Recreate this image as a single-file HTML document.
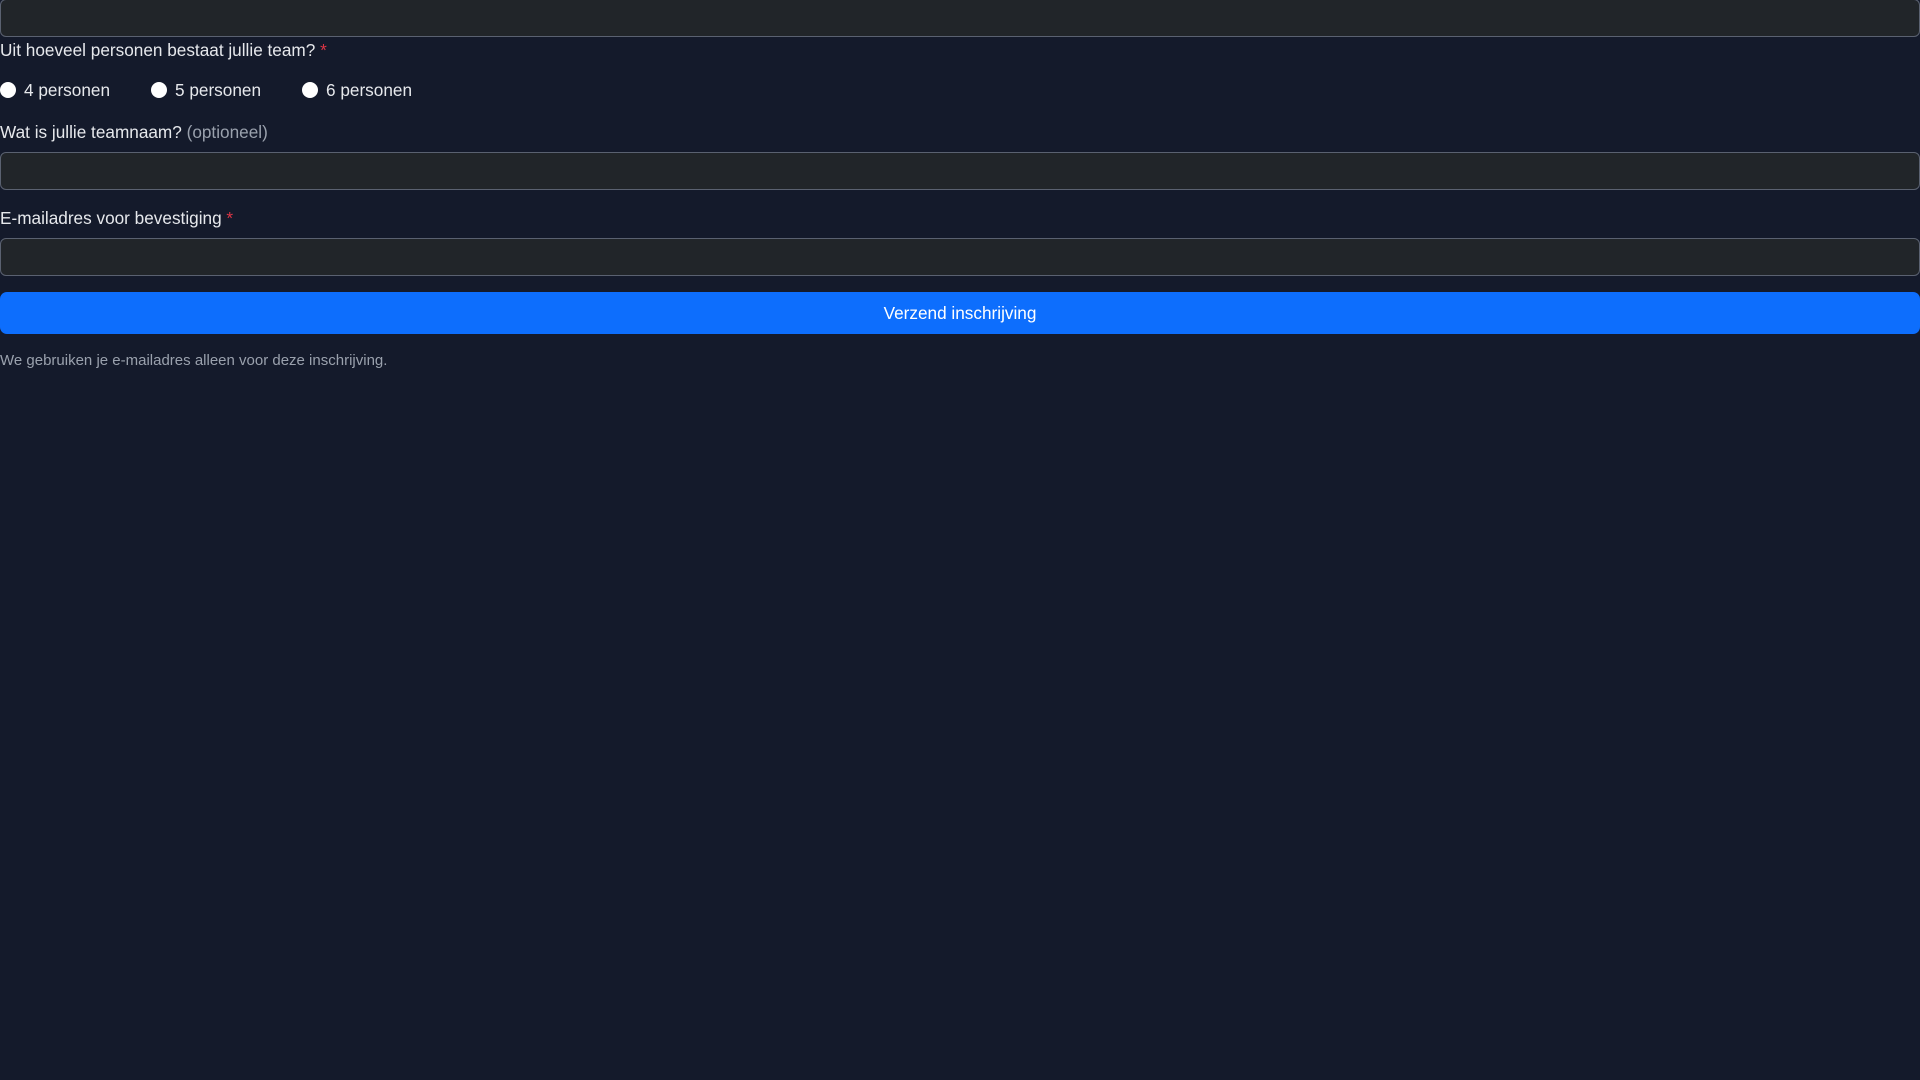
<!DOCTYPE html>
<html><head><meta charset="utf-8"><style>
html,body{margin:0;padding:0;width:1920px;height:1080px;overflow:hidden;background:#141a2b;font-family:"Liberation Sans",sans-serif;color:#e6e8ec}
.inp{position:absolute;left:0;width:1918px;height:36px;background:#212529;border:1px solid #5a6170;border-radius:6px}
.lbl{position:absolute;left:0;font-size:17.2px;line-height:20px}
.req{color:#dc3545}
.opt{color:#9aa1ad}
.radio{position:absolute;top:82px;width:16px;height:16px;border-radius:50%;background:#fff}
.rt{position:absolute;top:80px;font-size:17.2px;line-height:20px}
.btn{position:absolute;left:0;top:292px;width:1920px;height:42px;background:#0d6efd;border-radius:7px;color:#fff;font-size:17.2px;line-height:42px;text-align:center}
.note{position:absolute;left:0;top:352px;font-size:15px;line-height:18px;color:#9aa1ad}
</style></head><body>
<div class="inp" style="top:-1px"></div>
<div class="lbl" style="top:40px">Uit hoeveel personen bestaat jullie team? <span class="req">*</span></div>
<div class="radio" style="left:0"></div><div class="rt" style="left:24px">4 personen</div>
<div class="radio" style="left:151px"></div><div class="rt" style="left:175px">5 personen</div>
<div class="radio" style="left:302px"></div><div class="rt" style="left:326px">6 personen</div>
<div class="lbl" style="top:122px">Wat is jullie teamnaam? <span class="opt">(optioneel)</span></div>
<div class="inp" style="top:152px"></div>
<div class="lbl" style="top:208px">E-mailadres voor bevestiging <span class="req">*</span></div>
<div class="inp" style="top:238px"></div>
<div class="btn">Verzend inschrijving</div>
<div class="note">We gebruiken je e-mailadres alleen voor deze inschrijving.</div>
</body></html>
